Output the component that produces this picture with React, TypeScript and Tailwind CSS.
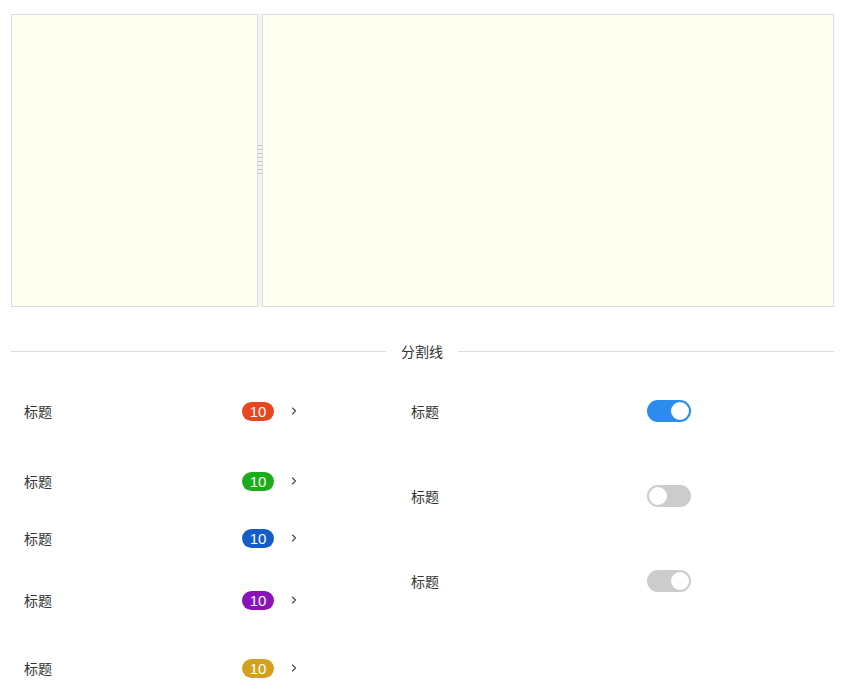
import { ChevronRight } from 'lucide-react';

const font = { fontFamily: '"Noto Sans CJK SC", "Noto Sans", sans-serif' };

function Badge({ color }: { color: string }) {
  return (
    <span
      className={`w-[32px] h-[19px] rounded-full text-white text-[15px] leading-[19px] text-center ${color}`}
      style={{ fontFamily: '"Liberation Sans", Arial, sans-serif' }}
    >
      10
    </span>
  );
}

function ListRow({ color, className }: { color: string; className: string }) {
  return (
    <div className={`flex items-center h-[20px] ${className}`}>
      <span className="pl-[13px] text-[14px] text-[#333] w-[231px]">标题</span>
      <Badge color={color} />
      <ChevronRight size={12} strokeWidth={2.2} className="ml-[14px] text-[#444]" />
    </div>
  );
}

function Toggle({ on, disabled }: { on: boolean; disabled?: boolean }) {
  const bg = on && !disabled ? 'bg-[#2b8cee]' : 'bg-[#cccccc]';
  return (
    <div className={`w-[44px] h-[22px] rounded-full p-[2px] flex ${on ? 'justify-end' : 'justify-start'} ${bg}`}>
      <div className="w-[18px] h-[18px] rounded-full bg-white" />
    </div>
  );
}

function SwitchRow({ on, disabled, className }: { on: boolean; disabled?: boolean; className: string }) {
  return (
    <div className={`flex items-center h-[22px] ${className}`}>
      <span className="pl-[13px] text-[14px] text-[#333] w-[249px]">标题</span>
      <Toggle on={on} disabled={disabled} />
    </div>
  );
}

export default function App() {
  return (
    <div className="w-[844px] h-[700px] bg-white pl-[11px] pr-[10px] pt-[14px] overflow-hidden" style={font}>
      {/* split panels */}
      <div className="flex h-[293px]">
        <div className="w-[247px] border border-[#dcdcdc] bg-[#fffff2]" />
        <div className="w-[4px] bg-[#f3f3f3] flex flex-col items-center justify-center gap-[3px] pb-[2px]">
          {Array.from({ length: 8 }).map((_, i) => (
            <div key={i} className="w-[4px] h-[1px] bg-[#c4c4d4]" />
          ))}
        </div>
        <div className="flex-1 border border-[#dcdcdc] bg-[#fffff2]" />
      </div>

      {/* divider */}
      <div className="flex items-center mt-[35px] h-[18px]">
        <div className="w-[375px] h-px bg-[#dcdcdc]" />
        <span className="px-[15px] text-[14px] text-[#333] leading-[18px]">分割线</span>
        <div className="flex-1 h-px bg-[#dcdcdc]" />
      </div>

      <div className="flex">
        <div className="w-[387px] flex flex-col">
          <ListRow color="bg-[#e8461e]" className="mt-[41px]" />
          <ListRow color="bg-[#1aad19]" className="mt-[50px]" />
          <ListRow color="bg-[#145dc9]" className="mt-[37px]" />
          <ListRow color="bg-[#8a12b8]" className="mt-[42px]" />
          <ListRow color="bg-[#d4a11c]" className="mt-[48px]" />
        </div>
        <div className="flex flex-col">
          <SwitchRow on className="mt-[40px]" />
          <SwitchRow on={false} className="mt-[63px]" />
          <SwitchRow on disabled className="mt-[63px]" />
        </div>
      </div>
    </div>
  );
}
